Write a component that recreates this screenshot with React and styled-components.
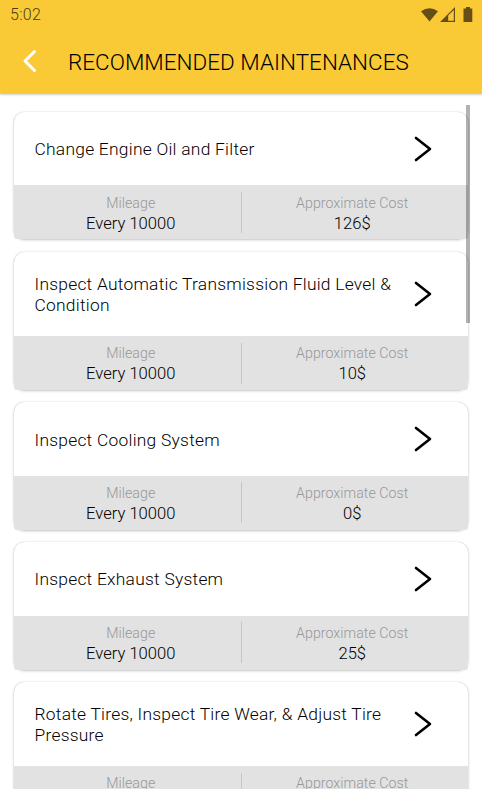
import React from 'react';
import styled, { createGlobalStyle } from 'styled-components';

const GlobalStyle = createGlobalStyle`
  * {
    box-sizing: border-box;
  }

  body {
    margin: 0;
    background: #fff;
    font-family: Roboto, sans-serif;
    font-weight: 360;
    color: #000;
    overflow: hidden;
  }
`;

const Screen = styled.div`
  height: 800px;
  display: flex;
  flex-direction: column;
  background: #fff;
`;

const Header = styled.header`
  flex: none;
  height: 94px;
  background: #faca36;
  box-shadow: 0 1px 2px rgba(0, 0, 0, 0.18);
`;

const StatusBar = styled.div`
  height: 30px;
  padding: 0 8px 0 10px;
  display: flex;
  align-items: center;
  justify-content: space-between;
  font-size: 16px;
  line-height: 18px;
  color: #4c3d10;
`;

const Clock = styled.span`
  padding-bottom: 1px;
  letter-spacing: 0.3px;
`;

const StatusIcons = styled.svg`
  width: 54px;
  height: 16px;
  margin-top: -1px;
  display: block;
`;

const TitleBar = styled.div`
  height: 64px;
  display: flex;
  align-items: center;
  padding-left: 22px;
`;

const BackButton = styled.button`
  width: 46px;
  height: 24px;
  margin-top: -2px;
  padding: 0;
  border: 0;
  background: none;
  display: flex;
`;

const Title = styled.h1`
  margin: 0;
  font-size: 22.45px;
  font-weight: 360;
  line-height: 26px;
  letter-spacing: 0.03px;
  white-space: nowrap;
`;

const ScrollArea = styled.main`
  position: relative;
  flex: none;
  height: 695px;
  overflow: hidden;
`;

const List = styled.div`
  display: flex;
  flex-direction: column;
  gap: 12.1px;
  padding: 17.9px 14px 0;
`;

const ScrollThumb = styled.div`
  position: absolute;
  top: 11px;
  right: 12px;
  width: 4px;
  height: 218px;
  background: rgba(0, 0, 0, 0.3);
`;

const Card = styled.article`
  flex: none;
  border-radius: 10px;
  background: #fff;
  box-shadow: 0 1px 3px rgba(0, 0, 0, 0.22), 0 0 1px rgba(0, 0, 0, 0.25);
`;

const CardTop = styled.div`
  min-height: 73.6px;
  padding: 21.3px 36px 21.3px 20.5px;
  display: flex;
  align-items: center;
  justify-content: space-between;
`;

const CardTitle = styled.p`
  width: 372px;
  margin: 0;
  padding-top: 1.2px;
  margin-bottom: -1.2px;
  font-size: 17.4px;
  line-height: 21px;
  letter-spacing: 0.25px;
`;

const CardBottom = styled.div`
  height: 54px;
  padding: 6.5px 6px;
  display: flex;
  background: #e2e2e2;
  border-radius: 0 0 3px 3px;
`;

const Cell = styled.div`
  flex: 1 1 0;
  padding-left: 1px;
  text-align: center;

  & + & {
    border-left: 1px solid #c6c6c6;
  }
`;

const Label = styled.div`
  padding-top: 0.7px;
  font-size: 14.2px;
  line-height: 20px;
  letter-spacing: 0.04px;
  color: #989898;
`;

const Value = styled.div`
  font-size: 16.6px;
  line-height: 21px;
`;

const items = [
  { title: 'Change Engine Oil and Filter', mileage: 'Every 10000', cost: '126$' },
  { title: 'Inspect Automatic Transmission Fluid Level & Condition', mileage: 'Every 10000', cost: '10$' },
  { title: 'Inspect Cooling System', mileage: 'Every 10000', cost: '0$' },
  { title: 'Inspect Exhaust System', mileage: 'Every 10000', cost: '25$' },
  { title: 'Rotate Tires, Inspect Tire Wear, & Adjust Tire Pressure' },
];

function Chevron() {
  return (
    <svg width="18" height="26" viewBox="0 0 18 26" fill="none">
      <path d="M2 2 L16 13 L2 24" stroke="#000" strokeWidth="2.6" strokeLinecap="round" strokeLinejoin="round" />
    </svg>
  );
}

function MaintenanceCard({ title, mileage, cost }) {
  return (
    <Card>
      <CardTop>
        <CardTitle>{title}</CardTitle>
        <Chevron />
      </CardTop>
      <CardBottom>
        <Cell>
          <Label>Mileage</Label>
          {mileage && <Value>{mileage}</Value>}
        </Cell>
        <Cell>
          <Label>Approximate Cost</Label>
          {cost && <Value>{cost}</Value>}
        </Cell>
      </CardBottom>
    </Card>
  );
}

function App() {
  return (
    <>
      <GlobalStyle />
      <Screen>
        <Header>
          <StatusBar>
            <Clock>5:02</Clock>
            {/* wifi, signal, battery */}
            <StatusIcons viewBox="0 0 54 16" fill="#645016">
              <path d="M1 4.3 Q9.5 -1.9 18 4.3 L9.5 14.5 Z" />
              <path d="M20 15 L35 0 V15 Z M28.2 8.6 V13.8 H33.8 V3 Z" fillRule="evenodd" />
              <path d="M46 0 h4 v1.5 h2.3 v13.5 h-8.8 v-13.5 h2.5 z" />
            </StatusIcons>
          </StatusBar>
          <TitleBar>
            <BackButton>
              <svg width="16" height="24" viewBox="0 0 16 24" fill="none">
                <path d="M12.5 2.5 L3 12 L12.5 21.5" stroke="#fff" strokeWidth="3" strokeLinecap="round" strokeLinejoin="round" />
              </svg>
            </BackButton>
            <Title>RECOMMENDED MAINTENANCES</Title>
          </TitleBar>
        </Header>
        <ScrollArea>
          <List>
            {items.map((item) => (
              <MaintenanceCard key={item.title} {...item} />
            ))}
          </List>
          <ScrollThumb />
        </ScrollArea>
      </Screen>
    </>
  );
}

export default App;
